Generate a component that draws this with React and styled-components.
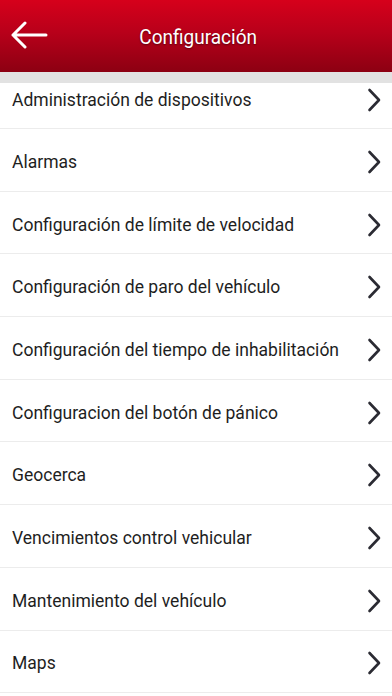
import styled, { createGlobalStyle } from 'styled-components'

const GlobalStyle = createGlobalStyle`
  body {
    margin: 0;
    background: #ffffff;
    font-family: Roboto, "Liberation Sans", sans-serif;
  }
`

const Screen = styled.div`
  width: 392px;
  height: 696px;
  overflow: hidden;
  display: flex;
  flex-direction: column;
  background: #ffffff;
`

const Header = styled.header`
  height: 72px;
  flex-shrink: 0;
  display: flex;
  align-items: center;
  background: linear-gradient(180deg, #d6001b 0%, #b8001a 45%, #8c0012 100%);
`

const BackButton = styled.button`
  border: none;
  background: none;
  padding: 0 0 0 11px;
  height: 100%;
  display: flex;
  align-items: center;
  cursor: pointer;
  margin-top: -3px;
`

const Title = styled.h1`
  flex: 1;
  margin: 2px 0 0 0;
  padding-right: 46px;
  text-align: center;
  color: #ffffff;
  font-size: 20px;
  font-weight: 400;
  transform: scaleX(0.95);
  text-shadow: 0 1px 2px rgba(0, 0, 0, 0.45);
`

const Band = styled.div`
  height: 11px;
  flex-shrink: 0;
  background: #e2e2e2;
`

const List = styled.ul`
  list-style: none;
  margin: 0;
  padding: 0;
`

const Row = styled.li`
  height: ${p => (p.$clipped ? '46px' : '62.7px')};
  box-sizing: border-box;
  display: flex;
  align-items: center;
  justify-content: space-between;
  padding: ${p => (p.$clipped ? '0 11px 12px 12px' : '4px 11px 0 12px')};
  border-bottom: 1.5px solid #ececec;
`

const Label = styled.span`
  color: #1e1e1e;
  font-size: 18.5px;
  transform: scaleX(0.947);
  transform-origin: left center;
  white-space: nowrap;
`

const Chevron = () => (
  <svg width="14" height="24" viewBox="0 0 14 24" fill="none">
    <path d="M2.5 2 L12 12 L2.5 22" stroke="#2b2b33" strokeWidth="2.6" strokeLinecap="round" strokeLinejoin="round" />
  </svg>
)

const BackArrow = () => (
  <svg width="37" height="28" viewBox="0 0 37 28" fill="none">
    <path d="M2 14 H35 M14 2 L2 14 L14 26" stroke="#ffffff" strokeWidth="3" strokeLinecap="round" strokeLinejoin="round" />
  </svg>
)

const items = [
  'Administración de dispositivos',
  'Alarmas',
  'Configuración de límite de velocidad',
  'Configuración de paro del vehículo',
  'Configuración del tiempo de inhabilitación',
  'Configuracion del botón de pánico',
  'Geocerca',
  'Vencimientos control vehicular',
  'Mantenimiento del vehículo',
  'Maps',
]

const App = () => {
  return (
    <Screen>
      <GlobalStyle />
      <Header>
        <BackButton aria-label="Atrás">
          <BackArrow />
        </BackButton>
        <Title>Configuración</Title>
      </Header>
      <Band />
      <List>
        {items.map((item, i) => (
          <Row key={item} $clipped={i === 0}>
            <Label>{item}</Label>
            <Chevron />
          </Row>
        ))}
      </List>
    </Screen>
  )
}

export default App
